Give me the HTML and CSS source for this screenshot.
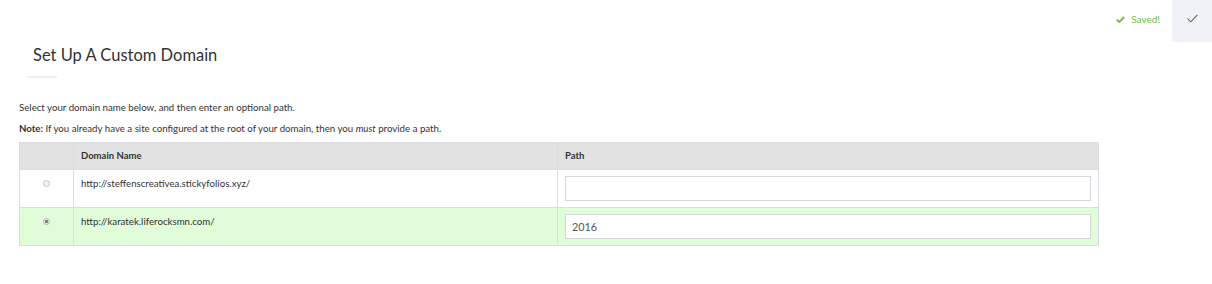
FILE: index.html
```html
<!DOCTYPE html>
<html>
	<head>
		<meta charset="UTF-8">
		<title>Set Up A Custom Domain</title>
		<link rel="stylesheet" href="styles.css">
	</head>
	<body>
		<div class="topbar">
			<div class="saved">
				<svg width="9" height="7" viewBox="0 0 9 7"><path d="M0.8 3.6 L3.3 6 L8.2 1" fill="none" stroke="#74bd3c" stroke-width="1.9"/></svg>
				<span>Saved!</span>
			</div>
			<div class="done">
				<svg width="11" height="9" viewBox="0 0 11 9"><path d="M0.6 4.6 L3.8 7.8 L10.4 0.8" fill="none" stroke="#666" stroke-width="1.1"/></svg>
			</div>
		</div>
		<div class="container">
			<h1 class="title">Set Up A Custom Domain</h1>
			<div class="title-line"></div>
			<p class="txt">Select your domain name below, and then enter an optional path.</p>
			<p class="txt"><b>Note:</b> If you already have a site configured at the root of your domain, then you <i>must</i> provide a path.</p>
			<table class="domains">
				<colgroup>
					<col class="c-radio">
					<col class="c-name">
					<col>
				</colgroup>
				<thead>
					<tr>
						<th></th>
						<th>Domain Name</th>
						<th>Path</th>
					</tr>
				</thead>
				<tbody>
					<tr>
						<td class="tc"><input type="radio" name="domain" class="rad"></td>
						<td>http://steffenscreativea.stickyfolios.xyz/</td>
						<td><input type="text" class="inp"></td>
					</tr>
					<tr class="active">
						<td class="tc"><input type="radio" name="domain" class="rad" checked></td>
						<td>http://karatek.liferocksmn.com/</td>
						<td><input type="text" class="inp" value="2016"></td>
					</tr>
				</tbody>
			</table>
		</div>
	</body>
</html>
```
FILE: styles.css
```css
*{padding:0;margin:0;box-sizing:border-box;}
body{font-size:9.7px;font-family:Lato,"Liberation Sans",sans-serif;color:#333;background:#fff;}
input{font-family:inherit;outline:none;}

.topbar{display:flex;justify-content:flex-end;height:42px;}
.saved{display:flex;align-items:center;gap:6px;padding-right:12px;color:#74bd3c;font-size:10px;padding-bottom:4px;}
.done{width:40px;background:#f1f2f5;display:flex;align-items:center;justify-content:center;padding-bottom:6px;}

.container{margin-left:19px;width:1080px;}
.title{font-size:16.5px;line-height:22px;font-weight:400;color:#333;margin:2px 0 0 14px;}
.title-line{width:30px;height:2px;background:#eee;margin:10px 0 0 8px;}
.txt{line-height:15px;margin-bottom:6px;}
.txt:first-of-type{margin-top:22px;}

.domains{width:100%;border-collapse:collapse;table-layout:fixed;}
.c-radio{width:54px;}
.c-name{width:484px;}
.domains th,.domains td{border:1px solid #dcdce2;padding:6px 7px;text-align:left;vertical-align:top;line-height:15px;}
.domains th{background:#e2e2e2;font-weight:700;font-size:9.5px;line-height:14px;}
.domains .tc{text-align:center;}
.domains .active td{background:#e0fcd9;}
.rad{appearance:none;-webkit-appearance:none;width:7px;height:7px;border:1px solid #c4c4c4;border-radius:50%;background:#f2f2f2;margin-top:4px;}
.rad:checked{background:radial-gradient(circle,#777 0,#777 1.3px,#e8e8e8 1.8px);border-color:#b8b8b8;}
.inp{display:block;width:100%;height:25px;border:1px solid #d6d6dd;padding:0 6px;font-size:10.8px;color:#555;background:#fff;}
```
